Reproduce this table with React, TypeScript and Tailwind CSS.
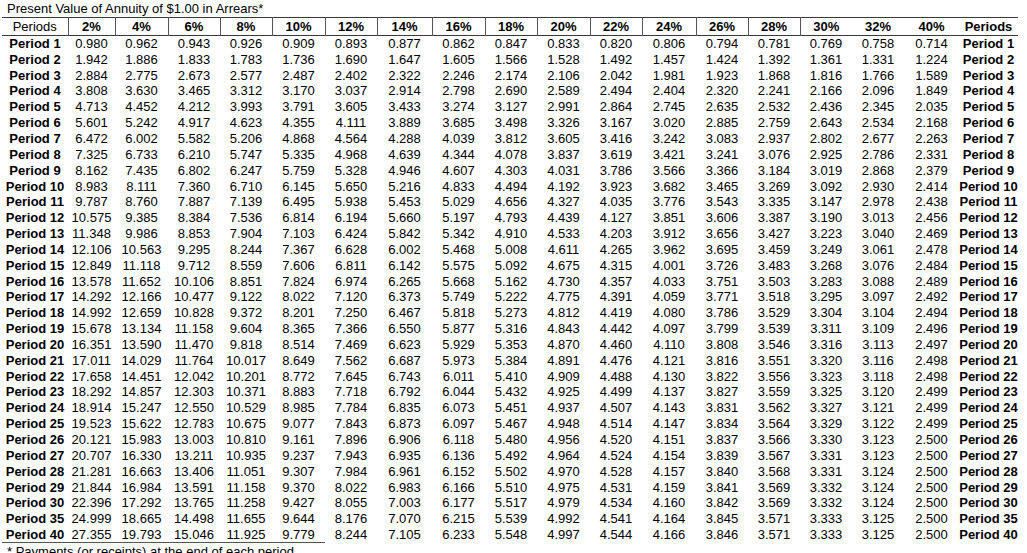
const rates = ["2%", "4%", "6%", "8%", "10%", "12%", "14%", "16%", "18%", "20%", "22%", "24%", "26%", "28%", "30%", "32%", "40%"];

// widths in px, Periods + 17 rates + Periods
const widths = [66, 47, 53, 52, 52, 53, 52, 55, 53, 52, 53, 52, 54, 52, 52, 52, 52, 55, 59];

const rows: [number, string][] = [
  [1, "0.980 0.962 0.943 0.926 0.909 0.893 0.877 0.862 0.847 0.833 0.820 0.806 0.794 0.781 0.769 0.758 0.714"],
  [2, "1.942 1.886 1.833 1.783 1.736 1.690 1.647 1.605 1.566 1.528 1.492 1.457 1.424 1.392 1.361 1.331 1.224"],
  [3, "2.884 2.775 2.673 2.577 2.487 2.402 2.322 2.246 2.174 2.106 2.042 1.981 1.923 1.868 1.816 1.766 1.589"],
  [4, "3.808 3.630 3.465 3.312 3.170 3.037 2.914 2.798 2.690 2.589 2.494 2.404 2.320 2.241 2.166 2.096 1.849"],
  [5, "4.713 4.452 4.212 3.993 3.791 3.605 3.433 3.274 3.127 2.991 2.864 2.745 2.635 2.532 2.436 2.345 2.035"],
  [6, "5.601 5.242 4.917 4.623 4.355 4.111 3.889 3.685 3.498 3.326 3.167 3.020 2.885 2.759 2.643 2.534 2.168"],
  [7, "6.472 6.002 5.582 5.206 4.868 4.564 4.288 4.039 3.812 3.605 3.416 3.242 3.083 2.937 2.802 2.677 2.263"],
  [8, "7.325 6.733 6.210 5.747 5.335 4.968 4.639 4.344 4.078 3.837 3.619 3.421 3.241 3.076 2.925 2.786 2.331"],
  [9, "8.162 7.435 6.802 6.247 5.759 5.328 4.946 4.607 4.303 4.031 3.786 3.566 3.366 3.184 3.019 2.868 2.379"],
  [10, "8.983 8.111 7.360 6.710 6.145 5.650 5.216 4.833 4.494 4.192 3.923 3.682 3.465 3.269 3.092 2.930 2.414"],
  [11, "9.787 8.760 7.887 7.139 6.495 5.938 5.453 5.029 4.656 4.327 4.035 3.776 3.543 3.335 3.147 2.978 2.438"],
  [12, "10.575 9.385 8.384 7.536 6.814 6.194 5.660 5.197 4.793 4.439 4.127 3.851 3.606 3.387 3.190 3.013 2.456"],
  [13, "11.348 9.986 8.853 7.904 7.103 6.424 5.842 5.342 4.910 4.533 4.203 3.912 3.656 3.427 3.223 3.040 2.469"],
  [14, "12.106 10.563 9.295 8.244 7.367 6.628 6.002 5.468 5.008 4.611 4.265 3.962 3.695 3.459 3.249 3.061 2.478"],
  [15, "12.849 11.118 9.712 8.559 7.606 6.811 6.142 5.575 5.092 4.675 4.315 4.001 3.726 3.483 3.268 3.076 2.484"],
  [16, "13.578 11.652 10.106 8.851 7.824 6.974 6.265 5.668 5.162 4.730 4.357 4.033 3.751 3.503 3.283 3.088 2.489"],
  [17, "14.292 12.166 10.477 9.122 8.022 7.120 6.373 5.749 5.222 4.775 4.391 4.059 3.771 3.518 3.295 3.097 2.492"],
  [18, "14.992 12.659 10.828 9.372 8.201 7.250 6.467 5.818 5.273 4.812 4.419 4.080 3.786 3.529 3.304 3.104 2.494"],
  [19, "15.678 13.134 11.158 9.604 8.365 7.366 6.550 5.877 5.316 4.843 4.442 4.097 3.799 3.539 3.311 3.109 2.496"],
  [20, "16.351 13.590 11.470 9.818 8.514 7.469 6.623 5.929 5.353 4.870 4.460 4.110 3.808 3.546 3.316 3.113 2.497"],
  [21, "17.011 14.029 11.764 10.017 8.649 7.562 6.687 5.973 5.384 4.891 4.476 4.121 3.816 3.551 3.320 3.116 2.498"],
  [22, "17.658 14.451 12.042 10.201 8.772 7.645 6.743 6.011 5.410 4.909 4.488 4.130 3.822 3.556 3.323 3.118 2.498"],
  [23, "18.292 14.857 12.303 10.371 8.883 7.718 6.792 6.044 5.432 4.925 4.499 4.137 3.827 3.559 3.325 3.120 2.499"],
  [24, "18.914 15.247 12.550 10.529 8.985 7.784 6.835 6.073 5.451 4.937 4.507 4.143 3.831 3.562 3.327 3.121 2.499"],
  [25, "19.523 15.622 12.783 10.675 9.077 7.843 6.873 6.097 5.467 4.948 4.514 4.147 3.834 3.564 3.329 3.122 2.499"],
  [26, "20.121 15.983 13.003 10.810 9.161 7.896 6.906 6.118 5.480 4.956 4.520 4.151 3.837 3.566 3.330 3.123 2.500"],
  [27, "20.707 16.330 13.211 10.935 9.237 7.943 6.935 6.136 5.492 4.964 4.524 4.154 3.839 3.567 3.331 3.123 2.500"],
  [28, "21.281 16.663 13.406 11.051 9.307 7.984 6.961 6.152 5.502 4.970 4.528 4.157 3.840 3.568 3.331 3.124 2.500"],
  [29, "21.844 16.984 13.591 11.158 9.370 8.022 6.983 6.166 5.510 4.975 4.531 4.159 3.841 3.569 3.332 3.124 2.500"],
  [30, "22.396 17.292 13.765 11.258 9.427 8.055 7.003 6.177 5.517 4.979 4.534 4.160 3.842 3.569 3.332 3.124 2.500"],
  [35, "24.999 18.665 14.498 11.655 9.644 8.176 7.070 6.215 5.539 4.992 4.541 4.164 3.845 3.571 3.333 3.125 2.500"],
  [40, "27.355 19.793 15.046 11.925 9.779 8.244 7.105 6.233 5.548 4.997 4.544 4.166 3.846 3.571 3.333 3.125 2.500"],
];

export default function App() {
  return (
    <div className="w-[1027px] h-[553px] overflow-hidden bg-white text-black font-['Liberation_Sans',Arial,sans-serif]">
      <p className="pl-[7px] pt-px text-[13px] leading-[15px]">
        Present Value of Annuity of $1.00 in Arrears*
      </p>
      <table className="ml-[2px] mt-px table-fixed border-collapse text-[13px]">
        <colgroup>
          {widths.map((w, i) => (
            <col key={i} style={{ width: w }} />
          ))}
        </colgroup>
        <thead>
          <tr className="h-[18px] border-t border-b border-[#3a3a3a]">
            <th className="p-0 text-center font-normal leading-none">Periods</th>
            {rates.map((r, i) => (
              <th
                key={r}
                className={
                  i < 15
                    ? "p-0 text-center font-bold leading-none border-l border-[#555]"
                    : "p-0 text-center font-bold leading-none"
                }
              >
                {r}
              </th>
            ))}
            <th className="p-0 text-center font-bold leading-none">Periods</th>
          </tr>
        </thead>
        <tbody>
          {rows.map(([n, vals], ri) => {
            const last = ri === rows.length - 1;
            const edge = last ? "border-b border-[#555]" : "";
            return (
              <tr key={n} className="h-[15.85px]">
                <td className={`p-0 text-center font-bold leading-none whitespace-nowrap ${edge}`}>Period {n}</td>
                {vals.split(" ").map((v, i) => (
                  <td key={i} className={`p-0 text-center leading-none ${i < 5 ? edge : ""}`}>
                    {v}
                  </td>
                ))}
                <td className="p-0 text-center font-bold leading-none whitespace-nowrap">Period {n}</td>
              </tr>
            );
          })}
        </tbody>
      </table>
      <p className="pl-[7px] mt-px text-[13px] leading-[15px]">
        * Payments (or receipts) at the end of each period
      </p>
    </div>
  );
}
